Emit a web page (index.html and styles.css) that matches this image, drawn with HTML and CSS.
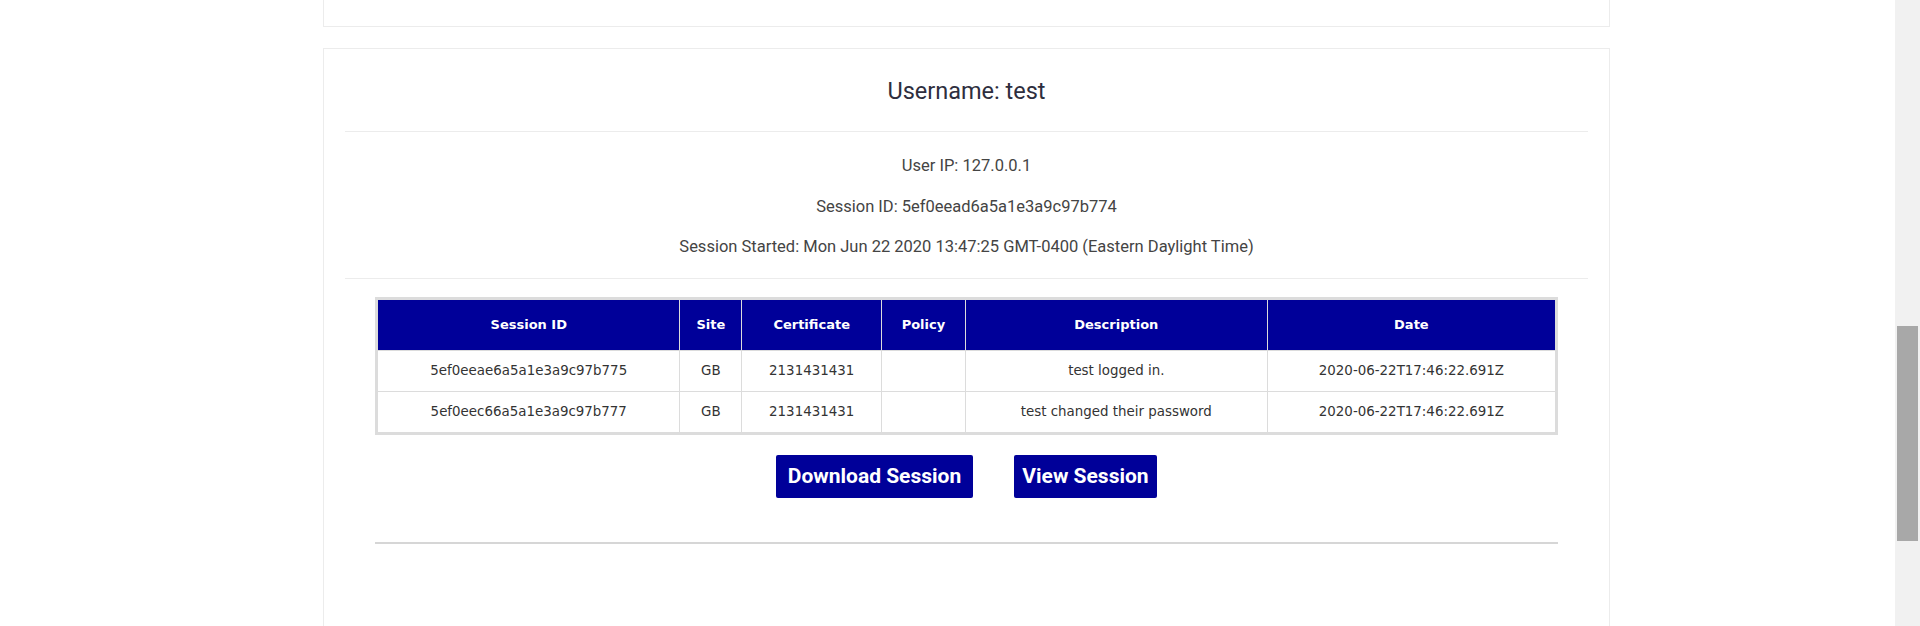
FILE: index.html
```html
<!DOCTYPE html>
<html>
<head>
<meta charset="utf-8">
<link rel="stylesheet" href="styles.css">
</head>
<body>
<div class="page">
  <div class="card card-top"></div>
  <div class="card card-main">
    <h2 class="title">Username: test</h2>
    <div class="rule"></div>
    <div class="info">
      <p>User IP: 127.0.0.1</p>
      <p>Session ID: 5ef0eead6a5a1e3a9c97b774</p>
      <p>Session Started: Mon Jun 22 2020 13:47:25 GMT-0400 (Eastern Daylight Time)</p>
    </div>
    <div class="rule"></div>
    <table class="log">
      <thead>
        <tr>
          <th class="c-id">Session ID</th>
          <th class="c-site">Site</th>
          <th class="c-cert">Certificate</th>
          <th class="c-pol">Policy</th>
          <th class="c-desc">Description</th>
          <th class="c-date">Date</th>
        </tr>
      </thead>
      <tbody>
        <tr>
          <td>5ef0eeae6a5a1e3a9c97b775</td>
          <td>GB</td>
          <td>2131431431</td>
          <td></td>
          <td>test logged in.</td>
          <td>2020-06-22T17:46:22.691Z</td>
        </tr>
        <tr>
          <td>5ef0eec66a5a1e3a9c97b777</td>
          <td>GB</td>
          <td>2131431431</td>
          <td></td>
          <td>test changed their password</td>
          <td>2020-06-22T17:46:22.691Z</td>
        </tr>
      </tbody>
    </table>
    <div class="actions">
      <button class="btn btn-dl">Download Session</button>
      <button class="btn btn-view">View Session</button>
    </div>
    <div class="bottom-rule"></div>
  </div>
</div>
<div class="scrollbar"><div class="thumb"></div></div>
</body>
</html>
```

FILE: styles.css
```css
html, body {
  margin: 0;
  padding: 0;
  background: #ffffff;
  overflow: hidden;
}
body {
  font-family: Roboto, "Liberation Sans", sans-serif;
  color: #444;
}
.page {
  padding-left: 323px;
  width: 1287px;
}
.card {
  border: 1px solid #ececec;
  box-sizing: border-box;
  background: #fff;
}
.card-top {
  height: 28px;
  margin-top: -1px;
  border-top: none;
}
.card-main {
  margin-top: 21px;
  padding: 0 21px;
  height: 620px;
}
.title {
  margin: 0;
  height: 82px;
  display: flex;
  align-items: center;
  justify-content: center;
  padding-top: 2px;
  box-sizing: border-box;
  font-family: Roboto, "Liberation Sans", sans-serif;
  font-size: 23.5px;
  font-weight: normal;
  color: #2e2e3e;
}
.rule {
  height: 1px;
  background: #ececec;
}
.info {
  padding: 14px 0 10px;
  text-align: center;
  font-size: 16.5px;
  color: #444;
}
.info p {
  margin: 0;
  height: 40.5px;
  line-height: 40.5px;
}
.log {
  margin: 18px auto 0;
  width: 1183px;
  border-collapse: collapse;
  border: 3px solid #dcdcdc;
  font-family: "DejaVu Sans", sans-serif;
  font-size: 13.4px;
}
.log th {
  background: #000099;
  color: #fff;
  font-weight: bold;
  font-size: 13px;
  height: 50px;
  border: 1px solid #dcdcdc;
  padding: 0;
}
.log td {
  height: 40px;
  text-align: center;
  color: #333;
  border: 1px solid #dcdcdc;
  padding: 0;
}
.c-id { width: 302px; }
.c-site { width: 61px; }
.c-cert { width: 139px; }
.c-pol { width: 83px; }
.c-desc { width: 302px; }
.c-date { width: 288px; }
.actions {
  display: flex;
  justify-content: center;
  gap: 41px;
  margin-top: 20px;
}
.btn {
  background: #000099;
  color: #fff;
  border: none;
  border-radius: 2px;
  height: 43px;
  font-family: Roboto, "Liberation Sans", sans-serif;
  font-weight: bold;
  font-size: 21px;
  padding: 0;
}
.btn-dl { width: 197px; }
.btn-view { width: 143px; }
.bottom-rule {
  margin: 44px auto 0;
  width: 1183px;
  height: 2px;
  background: #d6d6d6;
}
.scrollbar {
  position: fixed;
  top: 0;
  right: 0;
  width: 25px;
  height: 626px;
  background: #f1f1f1;
}
.thumb {
  position: absolute;
  left: 2px;
  right: 2px;
  top: 326px;
  height: 215px;
  background: #a8a8a8;
}
```
